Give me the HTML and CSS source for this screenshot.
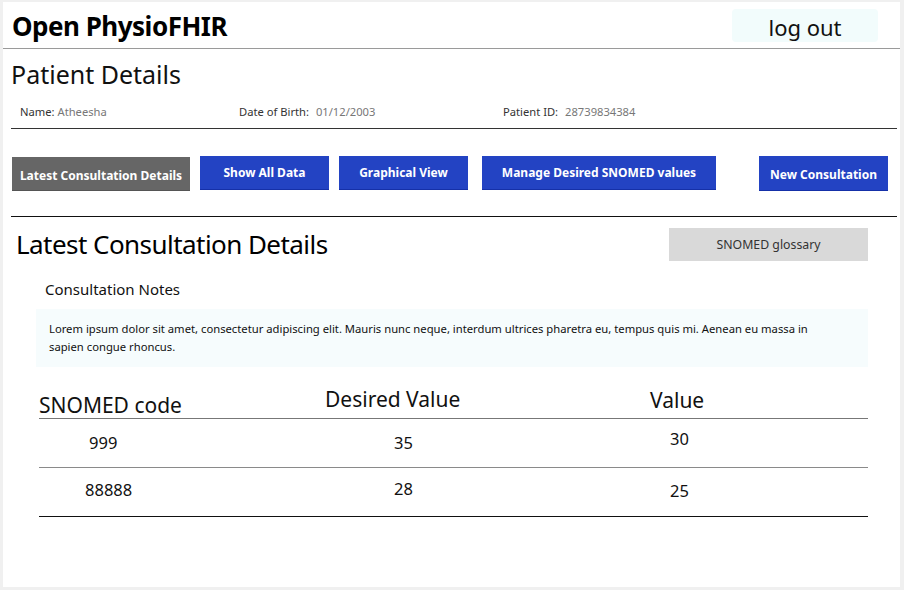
FILE: index.html
```html
<!DOCTYPE html>
<html lang="en">
<head>
<meta charset="utf-8">
<title>Open PhysioFHIR</title>
<link rel="stylesheet" href="styles.css">
</head>
<body>
<div class="page">
  <header class="topbar">
    <h1 class="brand">Open PhysioFHIR</h1>
    <button class="logout">log out</button>
  </header>

  <section class="patient">
    <h2 class="patient-title">Patient Details</h2>
    <div class="patient-info">
      <span class="field f-name"><span class="label">Name:</span> <span class="value">Atheesha</span></span>
      <span class="field f-dob"><span class="label">Date of Birth:</span> <span class="value">01/12/2003</span></span>
      <span class="field f-id"><span class="label">Patient ID:</span> <span class="value">28739834384</span></span>
    </div>
  </section>

  <nav class="actions">
    <button class="btn btn-active b1">Latest Consultation Details</button>
    <button class="btn b2">Show All Data</button>
    <button class="btn b3">Graphical View</button>
    <button class="btn b4">Manage Desired SNOMED values</button>
    <button class="btn b5">New Consultation</button>
  </nav>

  <main class="content">
    <div class="content-head">
      <h2 class="content-title">Latest Consultation Details</h2>
      <button class="glossary">SNOMED glossary</button>
    </div>
    <h3 class="notes-title">Consultation Notes</h3>
    <div class="notes">Lorem ipsum dolor sit amet, consectetur adipiscing elit. Mauris nunc neque, interdum ultrices pharetra eu, tempus quis mi. Aenean eu massa in sapien congue rhoncus.</div>

    <div class="table">
      <div class="row head">
        <div class="cell c1 h1">SNOMED code</div>
        <div class="cell c2 h2">Desired Value</div>
        <div class="cell c3 h3">Value</div>
      </div>
      <div class="row">
        <div class="cell c1 r1a">999</div>
        <div class="cell c2 r1b">35</div>
        <div class="cell c3 r1c">30</div>
      </div>
      <div class="row last">
        <div class="cell c1 r2a">88888</div>
        <div class="cell c2 r2b">28</div>
        <div class="cell c3 r2c">25</div>
      </div>
    </div>
  </main>
</div>
</body>
</html>
```

FILE: styles.css
```css
* { box-sizing: border-box; }
html, body {
  margin: 0;
  padding: 0;
  background: #f0f0f0;
}
body {
  font-family: "Noto Sans", "Open Sans", sans-serif;
  color: #111;
  padding: 2px 4px 3px 3px;
}
button {
  font-family: inherit;
  border: none;
  cursor: pointer;
}
.page {
  background: #fff;
  height: 585px;
  overflow: hidden;
}

/* top bar */
.topbar {
  display: flex;
  align-items: flex-start;
  justify-content: space-between;
  height: 47px;
  border-bottom: 1px solid #9a9a9a;
  padding: 0 22px 0 9px;
}
.brand {
  margin: 6px 0 0;
  font-size: 26px;
  font-weight: 700;
  color: #000;
  line-height: 36px;
  letter-spacing: -0.5px;
}
.logout {
  margin-top: 7px;
  width: 146px;
  height: 33px;
  background: #f2fcfc;
  border-radius: 4px;
  font-size: 22px;
  color: #111;
  padding: 3px 0 0;
  line-height: 30px;
}

/* patient */
.patient {
  padding: 0 3px 0 8px;
}
.patient-title {
  margin: 9px 0 0;
  font-size: 25px;
  font-weight: 400;
  line-height: 32px;
  color: #111;
}
.patient-info {
  display: flex;
  align-items: flex-start;
  height: 39px;
  border-bottom: 1px solid #333;
  font-size: 11.2px;
  padding-top: 14px;
  line-height: 15px;
}
.field { white-space: pre; }
.label { color: #333; }
.value { color: #777; }
.f-name { margin-left: 9px; width: 219px; }
.f-dob { width: 264px; }
.f-dob .value, .f-id .value { margin-left: 4px; }

/* action buttons */
.actions {
  display: flex;
  align-items: flex-start;
  height: 88px;
  margin: 0 3px 0 8px;
  padding-top: 27px;
  border-bottom: 1px solid #111;
}
.btn {
  height: 34px;
  background: #2343c3;
  color: #fff;
  font-weight: 700;
  font-size: 12px;
  padding: 0;
  border-bottom: 1px solid #1530a8;
}
.btn-active {
  background: #666;
  height: 34px;
  margin-top: 1px;
  border-bottom: 1px solid #555;
  padding-top: 3px;
}
.b1 { width: 178px; margin-left: 1px; }
.b2 { width: 129px; margin-left: 10px; }
.b3 { width: 129px; margin-left: 10px; }
.b4 { width: 234px; margin-left: 14px; }
.b5 { width: 129px; margin-left: 43px; height: 35px; padding-top: 2px; }

/* content */
.content {
  padding: 0 32px 0 13px;
}
.content-head {
  display: flex;
  justify-content: space-between;
  align-items: flex-start;
  margin-top: 10px;
}
.content-title {
  margin: 0;
  font-size: 26px;
  font-weight: 400;
  line-height: 34px;
  color: #000;
  letter-spacing: -0.55px;
}
.glossary {
  width: 199px;
  height: 33px;
  background: #d9d9d9;
  color: #333;
  font-size: 12.3px;
  margin-top: 1px;
}
.notes-title {
  margin: 17px 0 0 29px;
  font-size: 15px;
  font-weight: 400;
  line-height: 22px;
  color: #111;
}
.notes {
  margin: 9px 0 0 20px;
  background: #f6fcfd;
  height: 58px;
  padding: 11px 40px 0 13px;
  font-size: 11.25px;
  line-height: 18px;
  color: #111;
}

/* table */
.table {
  margin: 23px 0 0 23px;
}
.row {
  display: grid;
  grid-template-columns: 286px 325px 1fr;
  border-bottom: 1px solid #8a8a8a;
  height: 49px;
}
.row.head {
  height: 29px;
  border-bottom-color: #777;
}
.row.last { border-bottom-color: #111; }
.cell {
  font-size: 16.5px;
  color: #111;
  line-height: 22px;
}
.head .cell { font-size: 21px; line-height: 26px; }
.h1 { padding-top: 2px; }
.h2 { margin-top: -4px; }
.h3 { margin-top: -3px; }
.r1a { padding: 13px 0 0 50px; }
.r1b { padding: 13px 0 0 69px; }
.r1c { padding: 9px 0 0 20px; }
.r2a { padding: 11px 0 0 46px; }
.r2b { padding: 10px 0 0 69px; }
.r2c { padding: 12px 0 0 20px; }
```
